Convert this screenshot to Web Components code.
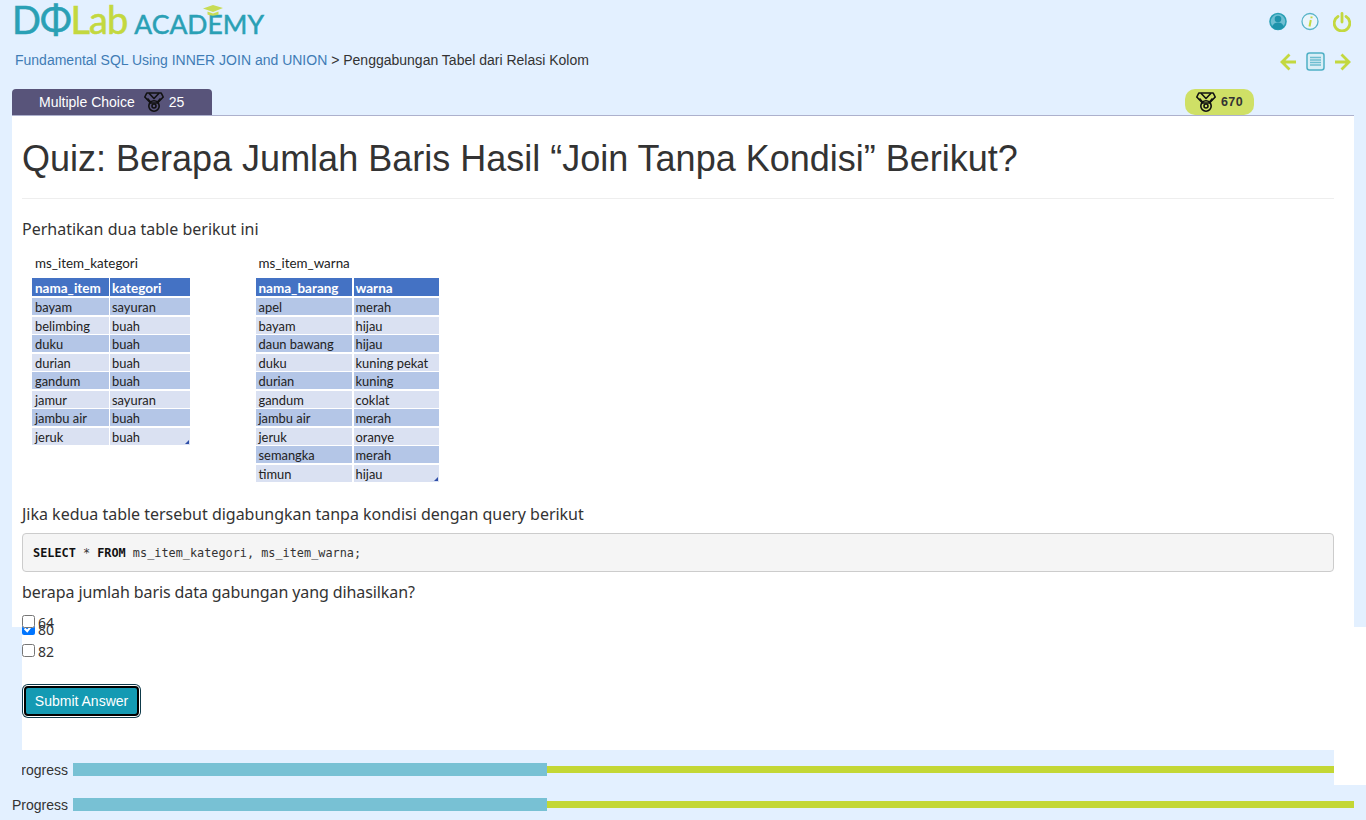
<!DOCTYPE html>
<html>
<head>
<meta charset="utf-8">
<title>Quiz</title>
<style>
  html, body { margin: 0; height: 820px; overflow: hidden; }
  body { background: #e3f0ff; font: 14px/20px "Liberation Sans", Arial, sans-serif; color: #333; }
  .txt { font: 16px/23px "Noto Sans", sans-serif; margin: 0; }
</style>
</head>
<body>
<dq-header></dq-header>
<dq-tabbar label="Multiple Choice" points="25" total="670"></dq-tabbar>

<dq-panel>
  <dq-heading>Quiz: Berapa Jumlah Baris Hasil “Join Tanpa Kondisi” Berikut?</dq-heading>
  <p class="txt" style="margin-top:19px">Perhatikan dua table berikut ini</p>
  <dq-tables>
    <dq-table caption="ms_item_kategori" cols="76.5px 80px" rows="nama_item,kategori;bayam,sayuran;belimbing,buah;duku,buah;durian,buah;gandum,buah;jamur,sayuran;jambu air,buah;jeruk,buah"></dq-table>
    <dq-table caption="ms_item_warna" cols="96.5px 85px" rows="nama_barang,warna;apel,merah;bayam,hijau;daun bawang,hijau;duku,kuning pekat;durian,kuning;gandum,coklat;jambu air,merah;jeruk,oranye;semangka,merah;timun,hijau"></dq-table>
  </dq-tables>
  <p class="txt" style="margin-top:18px;letter-spacing:-.015px">Jika kedua table tersebut digabungkan tanpa kondisi dengan query berikut</p>
  <dq-code></dq-code>
  <p class="txt" style="margin-top:9px;letter-spacing:-.1px">berapa jumlah baris data gabungan yang dihasilkan?</p>
  <dq-option style="margin-top:8px;position:relative;z-index:1">64</dq-option>
</dq-panel>

<dq-lower>
  <dq-option checked>80</dq-option>
  <dq-option>82</dq-option>
  <dq-submit>Submit Answer</dq-submit>
  <dq-progress slot="foot" shift></dq-progress>
</dq-lower>
<dq-progress></dq-progress>

<script>
const MEDAL = `<svg viewBox="0 0 20 20" width="20" height="20" fill="none" stroke="#111" stroke-width="1.6" stroke-linejoin="round">
  <path d="M2.800 1h14.400l2 4-5.700 6h-7L.8 5z"/>
  <path d="M5 1.200l5 5.300 5-5.300M3.500 6.500l3.500 4M16.500 6.500l-3.500 4"/>
  <circle cx="10" cy="14" r="5.200"/><circle cx="10" cy="14" r="2"/>
</svg>`;

class DqHeader extends HTMLElement {
  connectedCallback() {
    this.attachShadow({ mode: 'open' });
    this.shadowRoot.innerHTML = `
      <style>
        :host { display: block; height: 89px; padding: 0 15px; box-sizing: border-box; }
        .top { display: flex; justify-content: space-between; height: 44px; }
        .logo { display: flex; align-items: baseline; position: relative; height: 40px; font-family: Lato, sans-serif; line-height: 38px; white-space: nowrap; margin-left: -3px; }
        .dq { font-size: 38px; font-weight: 400; color: #2aa0b5; letter-spacing: -1px; -webkit-text-stroke: .6px #2aa0b5; }
        .lab { font-size: 38px; font-weight: 400; color: #c3d83f; letter-spacing: -1px; -webkit-text-stroke: .6px #c3d83f; }
        .acad { font-size: 26.500px; font-weight: 400; color: #2aa0b5; margin-left: 7px; -webkit-text-stroke: .5px #2aa0b5; }
        .cap { position: absolute; left: 191px; top: 5px; }
        .icons { display: flex; gap: 14px; padding-top: 12px; align-items: flex-start; }
        .crumb { display: flex; justify-content: space-between; align-items: flex-start; height: 40px; }
        .crumb span.path { line-height: 20px; margin-top: 6px; }
        .crumb a { color: #3f7cb5; text-decoration: none; }
        .nav { display: flex; gap: 10px; padding-top: 8px; align-items: center; }
      </style>
      <div class="top">
        <div class="logo">
          <span class="dq">DΦ</span><span class="lab">Lab</span><span class="acad">ACADEMY</span>
          <svg class="cap" width="20" height="11" viewBox="0 0 20 11"><path d="M0 3.500 10 0l10 3-10 4z" fill="#c8dc56"/><path d="M4.500 6.500v3c3 1.500 8 1.500 11 0v-3l-5.500 2z" fill="#c8dc56"/></svg>
        </div>
        <div class="icons">
          <svg width="18" height="19" viewBox="0 0 18 19"><circle cx="9" cy="9.500" r="8" fill="#6fbfd2" stroke="#2aa0b5" stroke-width="1.600"/><circle cx="9" cy="7" r="3.300" fill="#1e93ab"/><path d="M3 15c1-3.200 3.200-4.500 6-4.500s5 1.300 6 4.500c-3 3.400-9 3.400-12 0z" fill="#1e93ab"/></svg>
          <svg width="18" height="19" viewBox="0 0 18 19"><circle cx="9" cy="9.500" r="8" fill="#eaf5fb" stroke="#58b4c8" stroke-width="1.300"/><path d="M10.500 4.500v1.800M9.800 8l-1.300 6.500" stroke="#c3d83f" stroke-width="2" fill="none"/></svg>
          <svg width="18" height="20" viewBox="0 0 18 20" fill="none" stroke="#c3d83f" stroke-width="2.800" stroke-linecap="round"><path d="M5 4.500a7.800 7.800 0 1 0 8 0"/><path d="M9 1.500v8.500"/></svg>
        </div>
      </div>
      <div class="crumb">
        <span class="path"><a href="#">Fundamental SQL Using INNER JOIN and UNION</a> &gt; Penggabungan Tabel dari Relasi Kolom</span>
        <div class="nav">
          <svg width="16" height="18" viewBox="0 0 16 18" fill="none" stroke="#c3d83f" stroke-width="2.800"><path d="M16 9H2M9.500 1.500 2 9l7.500 7.500"/></svg>
          <svg width="19" height="19" viewBox="0 0 19 19" fill="none" stroke="#4fb0c6"><rect x="1" y="1" width="17" height="17" rx="2.500" stroke-width="1.500" fill="#d9eef6"/><path d="M4 5.500h11M4 8h11M4 10.500h11M4 13h11" stroke-width="1.300" stroke="#6dbdd0"/></svg>
          <svg width="16" height="18" viewBox="0 0 16 18" fill="none" stroke="#c3d83f" stroke-width="2.800"><path d="M0 9h14M6.500 1.500 14 9l-7.500 7.500"/></svg>
        </div>
      </div>`;
  }
}

class DqTabbar extends HTMLElement {
  connectedCallback() {
    this.attachShadow({ mode: 'open' });
    this.shadowRoot.innerHTML = `
      <style>
        :host { display: flex; margin: 0 12px; height: 27px; box-sizing: border-box; border-bottom: 1px solid #adb1cd; }
        .tab { width: 200px; box-sizing: border-box; padding-left: 27px; display: flex; align-items: center; background: #58547a; color: #fff; border-radius: 4px 4px 0 0; }
        .tab svg { margin: 0 5px 0 9px; }
        .pill { margin-left: auto; margin-right: 100px; width: 69px; box-sizing: border-box; padding-left: 11px; display: flex; align-items: center; gap: 5px; background: #cfe066; border-radius: 10px; font-size: 12.500px; font-weight: bold; letter-spacing: .4px; color: #333; }
      </style>
      <div class="tab"><span>${this.getAttribute('label')}</span>${MEDAL}<span>${this.getAttribute('points')}</span></div>
      <div class="pill">${MEDAL}<span>${this.getAttribute('total')}</span></div>`;
  }
}

class DqPanel extends HTMLElement {
  connectedCallback() {
    this.attachShadow({ mode: 'open' });
    this.shadowRoot.innerHTML = `
      <style>
        :host { display: block; margin: 0 12px; height: 511px; padding: 0 20px 0 10px; background: #fff; box-sizing: border-box; }
      </style>
      <slot></slot>`;
  }
}

class DqHeading extends HTMLElement {
  connectedCallback() {
    this.attachShadow({ mode: 'open' });
    this.shadowRoot.innerHTML = `
      <style>
        :host { display: block; padding: 23px 0 19px; border-bottom: 1px solid #eee; font-size: 36px; line-height: 40px; color: #333; }
      </style>
      <slot></slot>`;
  }
}

class DqTables extends HTMLElement {
  connectedCallback() {
    this.attachShadow({ mode: 'open' });
    this.shadowRoot.innerHTML = `
      <style>
        :host { display: flex; align-items: flex-start; gap: 65.500px; height: 244px; padding: 14px 0 0 10px; box-sizing: border-box; }
      </style>
      <slot></slot>`;
  }
}

class DqTable extends HTMLElement {
  connectedCallback() {
    const rows = this.getAttribute('rows').split(';').map(r => r.split(','));
    const cells = rows.map((r, i) => {
      const cls = i == 0 ? 'h' : (i % 2 ? 'o' : 'e');
      return r.map(c => `<div class="${cls}">${c}</div>`).join('');
    }).join('');
    this.attachShadow({ mode: 'open' });
    this.shadowRoot.innerHTML = `
      <style>
        :host { display: block; font: 12.900px/19px Lato, sans-serif; color: #222; }
        .cap { margin: 0 0 6px 3px; height: 17px; font-size: 13.400px; line-height: 17px; }
        .grid { position: relative; display: grid; grid-template-columns: ${this.getAttribute('cols')}; gap: 1.500px; grid-template-rows: 18.500px; grid-auto-rows: 17px; }
        .grid div { padding-left: 3px; white-space: nowrap; height: 17px; }
        .grid div:nth-child(even) { padding-left: 2px; }
        .grid .h { background: #4472c4; color: #fff; font-weight: bold; font-size: 13.500px; line-height: 21px; height: 18px; }
        .o { background: #b4c6e7; }
        .e { background: #dae1f2; }
        i { position: absolute; right: 1px; bottom: 1px; width: 0; height: 0; border: 2.500px solid #2f4fa8; border-top-color: transparent; border-left-color: transparent; }
      </style>
      <div class="cap">${this.getAttribute('caption')}</div>
      <div class="grid">${cells}<i></i></div>`;
  }
}

class DqCode extends HTMLElement {
  connectedCallback() {
    this.attachShadow({ mode: 'open' });
    this.shadowRoot.innerHTML = `
      <style>
        :host { display: block; margin-top: 7px; height: 39px; box-sizing: border-box; padding: 0 10px; background: #f5f5f5; border: 1px solid #ccc; border-radius: 4px; font: 11.850px/39px "DejaVu Sans Mono", monospace; color: #333; }
        pre { margin: 0; font: inherit; }
        b { color: #111; }
      </style>
      <pre><b>SELECT</b> * <b>FROM</b> ms_item_kategori, ms_item_warna;</pre>`;
  }
}

class DqOption extends HTMLElement {
  connectedCallback() {
    this.attachShadow({ mode: 'open' });
    this.shadowRoot.innerHTML = `
      <style>
        :host { display: flex; align-items: center; height: 22px; font: 14px/22px "Noto Sans", sans-serif; color: #333; }
        input { width: 13px; height: 13px; margin: 0 3px 3px 0; }
      </style>
      <input type="checkbox" ${this.hasAttribute('checked') ? 'checked' : ''}><slot></slot>`;
  }
}

class DqLower extends HTMLElement {
  connectedCallback() {
    this.attachShadow({ mode: 'open' });
    this.shadowRoot.innerHTML = `
      <style>
        :host { display: flow-root; margin-left: 22px; height: 158px; background: #fff; }
        .body { margin-top: -8px; height: 131px; }
        .foot { width: 1312px; overflow: hidden; }
      </style>
      <div class="body"><slot></slot></div>
      <div class="foot"><slot name="foot"></slot></div>`;
  }
}

class DqSubmit extends HTMLElement {
  connectedCallback() {
    this.attachShadow({ mode: 'open' });
    this.shadowRoot.innerHTML = `
      <style>
        :host { display: block; margin-top: 23px; padding-left: 2px; }
        button { display: block; width: 115px; height: 30px; margin: 0; box-sizing: border-box; padding: 0; border: 2px solid #000; border-radius: 4px; box-shadow: 0 0 0 1px #fff, 0 0 0 2px #0e3a4a; background: #149ab3; color: #fff; font: 14px "Liberation Sans", sans-serif; }
      </style>
      <button><slot></slot></button>`;
  }
}

class DqProgress extends HTMLElement {
  connectedCallback() {
    const shift = this.hasAttribute('shift');
    this.attachShadow({ mode: 'open' });
    this.shadowRoot.innerHTML = `
      <style>
        :host { display: flex; align-items: center; height: 35px; box-sizing: border-box; padding-top: 4px; background: #e3f0ff; color: #333;
          margin-left: ${shift ? '-10px' : '12px'}; width: ${shift ? '1322px' : '1342px'}; }
        .label { width: 56px; margin-right: 5px; text-align: right; white-space: nowrap; }
        .done { width: 474px; height: 13px; background: #78c1d4; }
        .left { flex: 1; height: 7px; background: #c3d735; }
      </style>
      <div class="label">Progress</div><div class="done"></div><div class="left"></div>`;
  }
}

customElements.define('dq-header', DqHeader);
customElements.define('dq-tabbar', DqTabbar);
customElements.define('dq-panel', DqPanel);
customElements.define('dq-heading', DqHeading);
customElements.define('dq-tables', DqTables);
customElements.define('dq-table', DqTable);
customElements.define('dq-code', DqCode);
customElements.define('dq-option', DqOption);
customElements.define('dq-lower', DqLower);
customElements.define('dq-submit', DqSubmit);
customElements.define('dq-progress', DqProgress);
</script>
</body>
</html>
